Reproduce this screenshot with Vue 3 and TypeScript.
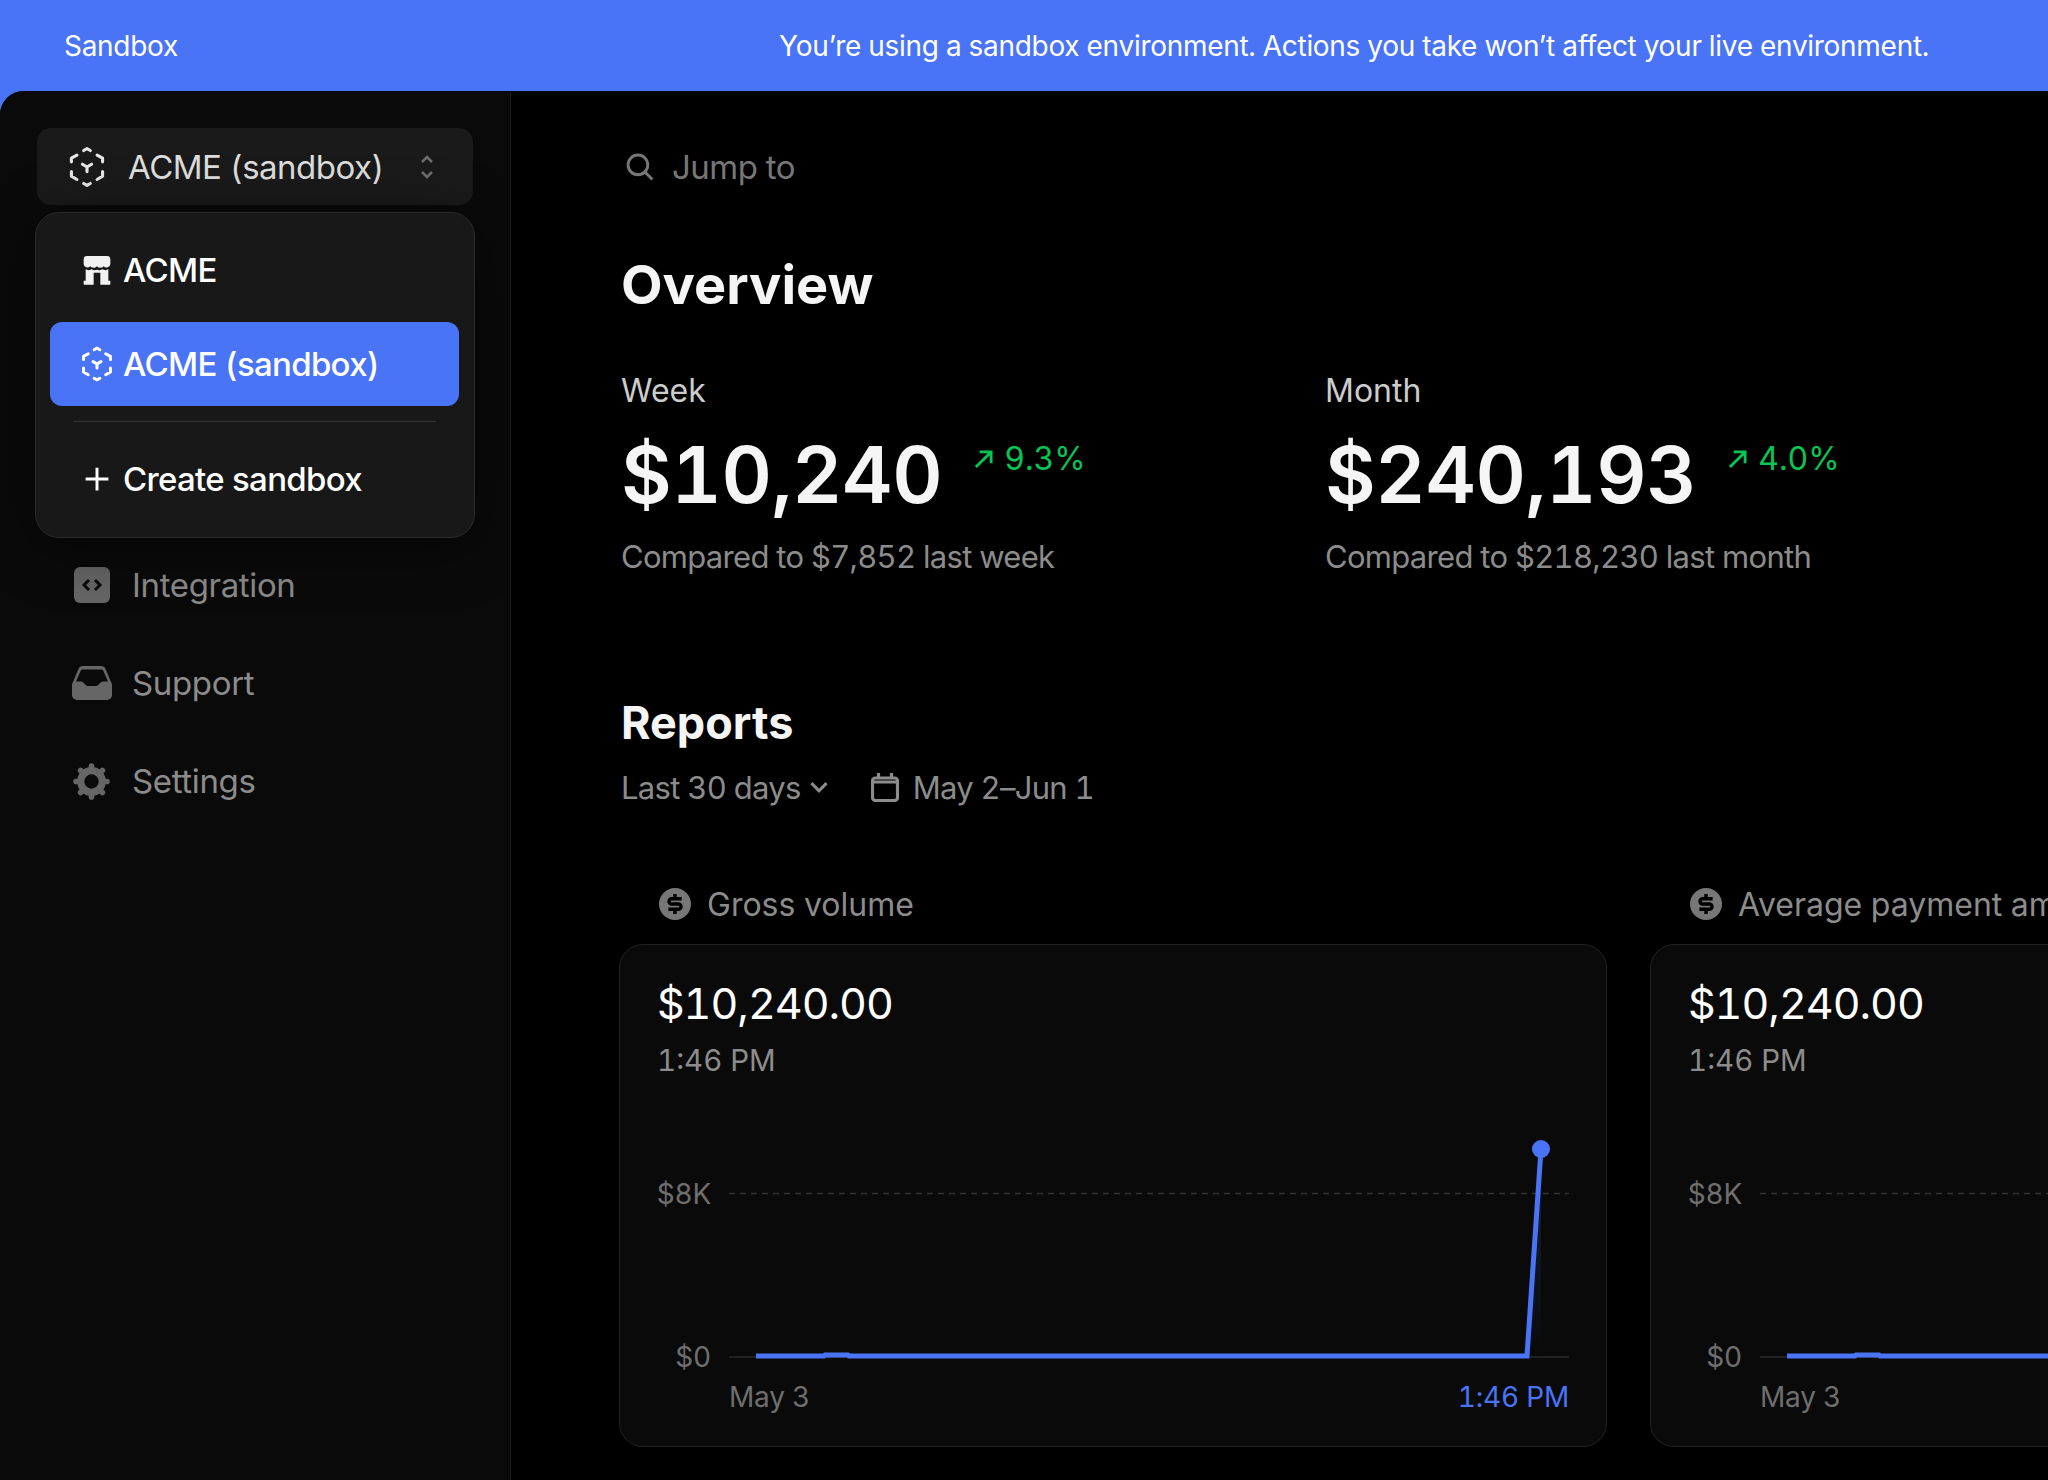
<template>
  <div class="app">
    <header class="banner">
      <span>Sandbox</span>
      <span class="banner-note">You’re using a sandbox environment. Actions you take won’t affect your live environment.</span>
    </header>

    <div class="shell">
      <aside class="sidebar">
        <button class="switcher">
          <svg class="cube" viewBox="0 0 24 24"><path :d="cubePath" /></svg>
          <span class="switcher-name">ACME (sandbox)</span>
          <svg class="updown" viewBox="0 0 16 28"><path d="M3 9l5-5 5 5M3 19l5 5 5-5" /></svg>
        </button>

        <div class="dropdown">
          <div class="drop-item">
            <svg class="store" viewBox="0 0 24 24">
              <path d="M4.500 1.500h15A2.500 2.500 0 0 1 22 4v3.600a2.900 2.900 0 0 1-5 1.500 3.300 3.300 0 0 1-5 0 3.300 3.300 0 0 1-5 0 2.900 2.900 0 0 1-5-1.500V4a2.500 2.500 0 0 1 2.500-2.500z" />
              <path d="M3.500 11.500c1.500.8 3 .8 4.500 0 1.200.8 2.700 1 4 .4 1.300.6 2.800.4 4-.4 1.500.8 3 .8 4.500 0v8.500H22v2.500a.5.5 0 0 1-.5.5h-7v-9h-5v9h-7a.5.5 0 0 1-.5-.5V20h1.500z" />
            </svg>
            <span>ACME</span>
          </div>
          <div class="drop-item active">
            <svg class="cube small" viewBox="0 0 24 24"><path :d="cubePath" /></svg>
            <span>ACME (sandbox)</span>
          </div>
          <div class="drop-sep"></div>
          <div class="drop-item create">
            <svg class="plus" viewBox="0 0 24 24"><path d="M12 1.500v21M1.500 12h21" /></svg>
            <span>Create sandbox</span>
          </div>
        </div>

        <nav class="nav">
          <a class="nav-item">
            <span class="nav-icon">
              <svg viewBox="0 0 36 36" width="36" height="36">
                <rect width="36" height="36" rx="6" fill="#666" />
                <path d="M15 13l-5 5 5 5M21 13l5 5-5 5" fill="none" stroke="#0a0a0a" stroke-width="3" />
              </svg>
            </span>
            Integration
          </a>
          <a class="nav-item">
            <span class="nav-icon">
              <svg viewBox="0 0 40 34" width="40" height="34">
                <path fill="#666" fill-rule="evenodd" d="M11 0h18a5 5 0 0 1 4.600 3l5.400 13a5 5 0 0 1 1 3v10a5 5 0 0 1-5 5H5a5 5 0 0 1-5-5V19a5 5 0 0 1 1-3L6.400 3A5 5 0 0 1 11 0zM10.500 3.500a2 2 0 0 0-1.800 1.200L4 15.500h5C12 15.500 13 20 16 20h8c3 0 4-4.500 7-4.500h5L31.300 4.700a2 2 0 0 0-1.800-1.200z" />
              </svg>
            </span>
            Support
          </a>
          <a class="nav-item">
            <span class="nav-icon">
              <svg viewBox="0 0 36 36" width="37" height="37">
                <g stroke="#666" stroke-width="5.500" stroke-linecap="round">
                  <line v-for="a in gearTeeth" :key="a" x1="18" y1="7" x2="18" y2="3" :transform="`rotate(${a} 18 18)`" />
                </g>
                <circle cx="18" cy="18" r="10.500" fill="none" stroke="#666" stroke-width="7" />
              </svg>
            </span>
            Settings
          </a>
        </nav>
      </aside>

      <main class="main">
        <div class="jump">
          <svg class="search" viewBox="0 0 27 27"><circle cx="11.500" cy="11.500" r="9.500" /><path d="M18.500 18.500l7 7" /></svg>
          <span>Jump to</span>
        </div>

        <h1>Overview</h1>

        <section class="stats">
          <div v-for="s in stats" :key="s.label" class="stat">
            <div class="stat-label">{{ s.label }}</div>
            <div class="stat-row">
              <span class="stat-value">{{ s.value }}</span>
              <svg class="trend" viewBox="0 0 20 20"><path d="M2 18L18 2M6 2h12v12" /></svg>
              <span class="stat-delta">{{ s.delta }}</span>
            </div>
            <div class="stat-note">{{ s.note }}</div>
          </div>
        </section>

        <h2>Reports</h2>
        <div class="filters">
          <span>Last 30 days</span>
          <svg class="chev" viewBox="0 0 18 12"><path d="M2 2l7 7 7-7" /></svg>
          <svg class="cal" viewBox="0 0 28 30">
            <rect x="1.500" y="6" width="25" height="22.500" rx="3" />
            <path class="cal-bar" d="M1.500 10h25M7.500 1v5M20.500 1v5" />
          </svg>
          <span>May 2–Jun 1</span>
        </div>

        <section class="cards">
          <div v-for="c in cards" :key="c.title" class="card-col">
            <div class="card-title">
              <svg class="dollar" viewBox="0 0 24 24">
                <circle cx="12" cy="12" r="12" />
                <path d="M17 8H9.500a2 2 0 0 0 0 4h5a2 2 0 0 1 0 4H7M12 4.500V8M12 16v3.500" />
              </svg>
              <span>{{ c.title }}</span>
            </div>
            <div class="card">
              <div class="card-value">{{ c.value }}</div>
              <div class="card-time">{{ c.time }}</div>
              <svg class="chart" viewBox="0 0 985 346" width="985" height="346">
                <defs>
                  <linearGradient id="spike" x1="0" y1="0" x2="0" y2="1">
                    <stop offset="0" stop-color="#4a74f6" stop-opacity="0.22" />
                    <stop offset="1" stop-color="#4a74f6" stop-opacity="0" />
                  </linearGradient>
                </defs>
                <line x1="109" y1="93.500" x2="949" y2="93.500" class="grid" />
                <line x1="109" y1="257" x2="949" y2="257" class="axis" />
                <polygon points="907,256 921,49 921,256" fill="url(#spike)" />
                <polyline points="136,256 204,256 205,255 228,255 229,256 907,256 921,49" class="line" />
                <circle cx="921" cy="49" r="9" fill="#4a74f6" />
                <text x="91" y="104" text-anchor="end" class="tick">$8K</text>
                <text x="91" y="267" text-anchor="end" class="tick">$0</text>
                <text x="109" y="307" class="tick">May 3</text>
                <text x="949" y="307" text-anchor="end" class="tick now">{{ c.time }}</text>
              </svg>
            </div>
          </div>
        </section>
      </main>
    </div>
  </div>
</template>

<script setup lang="ts">
const cubePath =
  'M10.200 3 12 2l1.800 1M17.500 5.500l3 1.700v2M6.500 5.500l-3 1.700v2M3.500 14.500v2.500l3 1.800M20.500 14.500v2.500l-3 1.800M10.200 21l1.800 1 1.800-1M12 12l-2.500-1.500M12 12l2.500-1.500M12 12v2.500'

const gearTeeth = [0, 45, 90, 135, 180, 225, 270, 315]

const stats = [
  { label: 'Week', value: '$10,240', delta: '9.3%', note: 'Compared to $7,852 last week' },
  { label: 'Month', value: '$240,193', delta: '4.0%', note: 'Compared to $218,230 last month' }
]

const cards = [
  { title: 'Gross volume', value: '$10,240.00', time: '1:46 PM' },
  { title: 'Average payment amount', value: '$10,240.00', time: '1:46 PM' }
]
</script>

<style>
html, body { margin: 0; background: #000; }
</style>

<style scoped>
.app { width: 2048px; height: 1480px; overflow: hidden; display: flex; flex-direction: column; background: #4a74f6; font-family: Inter, "Liberation Sans", sans-serif; font-variant-numeric: tabular-nums; }
.banner { height: 91px; flex: none; display: flex; align-items: center; justify-content: space-between; padding: 0 119px 0 64px; color: #fff; font-size: 28px; letter-spacing: -0.29px; }
.shell { flex: 1; min-height: 0; display: flex; background: #000; border-top-left-radius: 24px; overflow: hidden; }

.sidebar { position: relative; width: 511px; flex: none; box-sizing: border-box; background: #0a0a0a; border-right: 1px solid #1c1c1c; padding: 37px 37px 0; }
.switcher { width: 436px; height: 77px; display: flex; align-items: center; padding: 0 0 0 28px; box-sizing: border-box; background: #1a1a1a; border: none; border-radius: 14px; color: #ddd; font: inherit; font-size: 33px; letter-spacing: -0.5px; }
.cube { width: 44px; height: 44px; flex: none; fill: none; stroke: #e6e6e6; stroke-width: 1.700; stroke-linecap: round; stroke-linejoin: round; }
.cube.small { width: 38px; height: 38px; margin: 0 -3px; stroke: #fff; stroke-width: 1.900; }
.switcher-name { margin-left: 19px; white-space: nowrap; }
.updown { width: 16px; height: 28px; margin-left: auto; margin-right: 38px; flex: none; fill: none; stroke: #6e6e6e; stroke-width: 2.500; }

.dropdown { position: absolute; left: 35px; top: 121px; width: 440px; height: 326px; box-sizing: border-box; padding: 1px 15px 1px 14px; background: #181818; border: 1.500px solid #2a2a2a; border-radius: 24px; box-shadow: 0 10px 60px rgba(0, 0, 0, 0.45); color: #fff; font-size: 33px; font-weight: 500; letter-spacing: -0.7px; z-index: 2; }
.drop-item { height: 84px; display: flex; align-items: center; gap: 10px; padding-left: 31px; border-radius: 12px; margin-top: 14px; }
.drop-item.active { background: #4a74f6; margin-top: 10px; }
.drop-item.create { margin-top: 15px; }
.store { width: 32px; height: 32px; fill: #f2f2f2; }
.plus { width: 26px; height: 26px; margin: 0 3px; fill: none; stroke: #fff; stroke-width: 2.700; }
.drop-sep { height: 1px; background: #333; margin: 15px 23px 0; }

.nav { margin-top: 331px; display: flex; flex-direction: column; color: #8c8c8c; font-size: 33px; letter-spacing: -0.35px; }
.nav-item { height: 98px; display: flex; align-items: center; }
.nav-icon { width: 109px; margin-right: -14px; display: flex; justify-content: center; }

.main { flex: 1; min-width: 0; padding: 56px 0 0 110px; color: #f5f5f5; }
.jump { height: 40px; display: flex; align-items: center; gap: 18px; color: #777; font-size: 33px; letter-spacing: -0.5px; padding-left: 5px; }
.search { width: 28px; height: 28px; fill: none; stroke: #777; stroke-width: 2.800; }
h1 { margin: 68px 0 0; font-size: 54px; line-height: 60px; font-weight: 700; }
.stats { display: grid; grid-template-columns: 704px 704px; margin-top: 58px; }
.stat-label { font-size: 32px; line-height: 36px; color: #ccc; }
.stat-row { display: flex; align-items: flex-start; margin-top: 21px; height: 90px; }
.stat-value { font-size: 78px; line-height: 90px; font-weight: 600; letter-spacing: -0.4px; }
.trend { width: 19px; height: 19px; margin: 20px 0 0 32px; fill: none; stroke: #07c655; stroke-width: 3; }
.stat-delta { margin: 9px 0 0 11px; font-size: 32px; line-height: 40px; color: #07c655; }
.stat-note { margin-top: 19px; font-size: 31px; line-height: 36px; color: #8c8c8c; letter-spacing: -0.7px; }
h2 { margin: 123px 0 0; font-size: 45px; line-height: 50px; font-weight: 700; }
.filters { margin-top: 21px; height: 36px; display: flex; align-items: center; color: #8c8c8c; font-size: 31px; letter-spacing: -0.7px; }
.chev { width: 20px; height: 13px; margin-left: 8px; fill: none; stroke: #8c8c8c; stroke-width: 2.800; }
.cal { width: 28px; height: 30px; margin: 0 14px 0 42px; fill: none; stroke: #8c8c8c; stroke-width: 3.200; }
.cards { display: flex; gap: 43px; margin: 81px 0 0 -2px; }
.card-col { width: 988px; flex: none; }
.card-title { height: 36px; display: flex; align-items: center; gap: 16px; padding-left: 40px; color: #8c8c8c; font-size: 32px; white-space: nowrap; }
.dollar { width: 32px; height: 32px; flex: none; }
.dollar circle { fill: #777; }
.dollar path { fill: none; stroke: #000; stroke-width: 2.600; }
.card { margin-top: 22px; height: 503px; box-sizing: border-box; border: 1.500px solid #222; border-radius: 24px; background: #0a0a0a; padding-top: 30px; color: #fff; }
.card-value { margin-left: 37px; font-size: 43px; line-height: 56px; letter-spacing: -1px; }
.card-time { margin: 11px 0 0 37px; font-size: 29.500px; line-height: 36px; color: #8c8c8c; }
.chart { display: block; margin-top: 22px; }
.grid { stroke: #333; stroke-width: 1.500; stroke-dasharray: 6 5; }
.axis { stroke: #2a2a2a; stroke-width: 1.500; }
.line { fill: none; stroke: #4a74f6; stroke-width: 5; }
.tick { font-size: 28px; fill: #6e6e6e; letter-spacing: -0.2px; }
.tick.now { fill: #4a74f6; }
</style>
